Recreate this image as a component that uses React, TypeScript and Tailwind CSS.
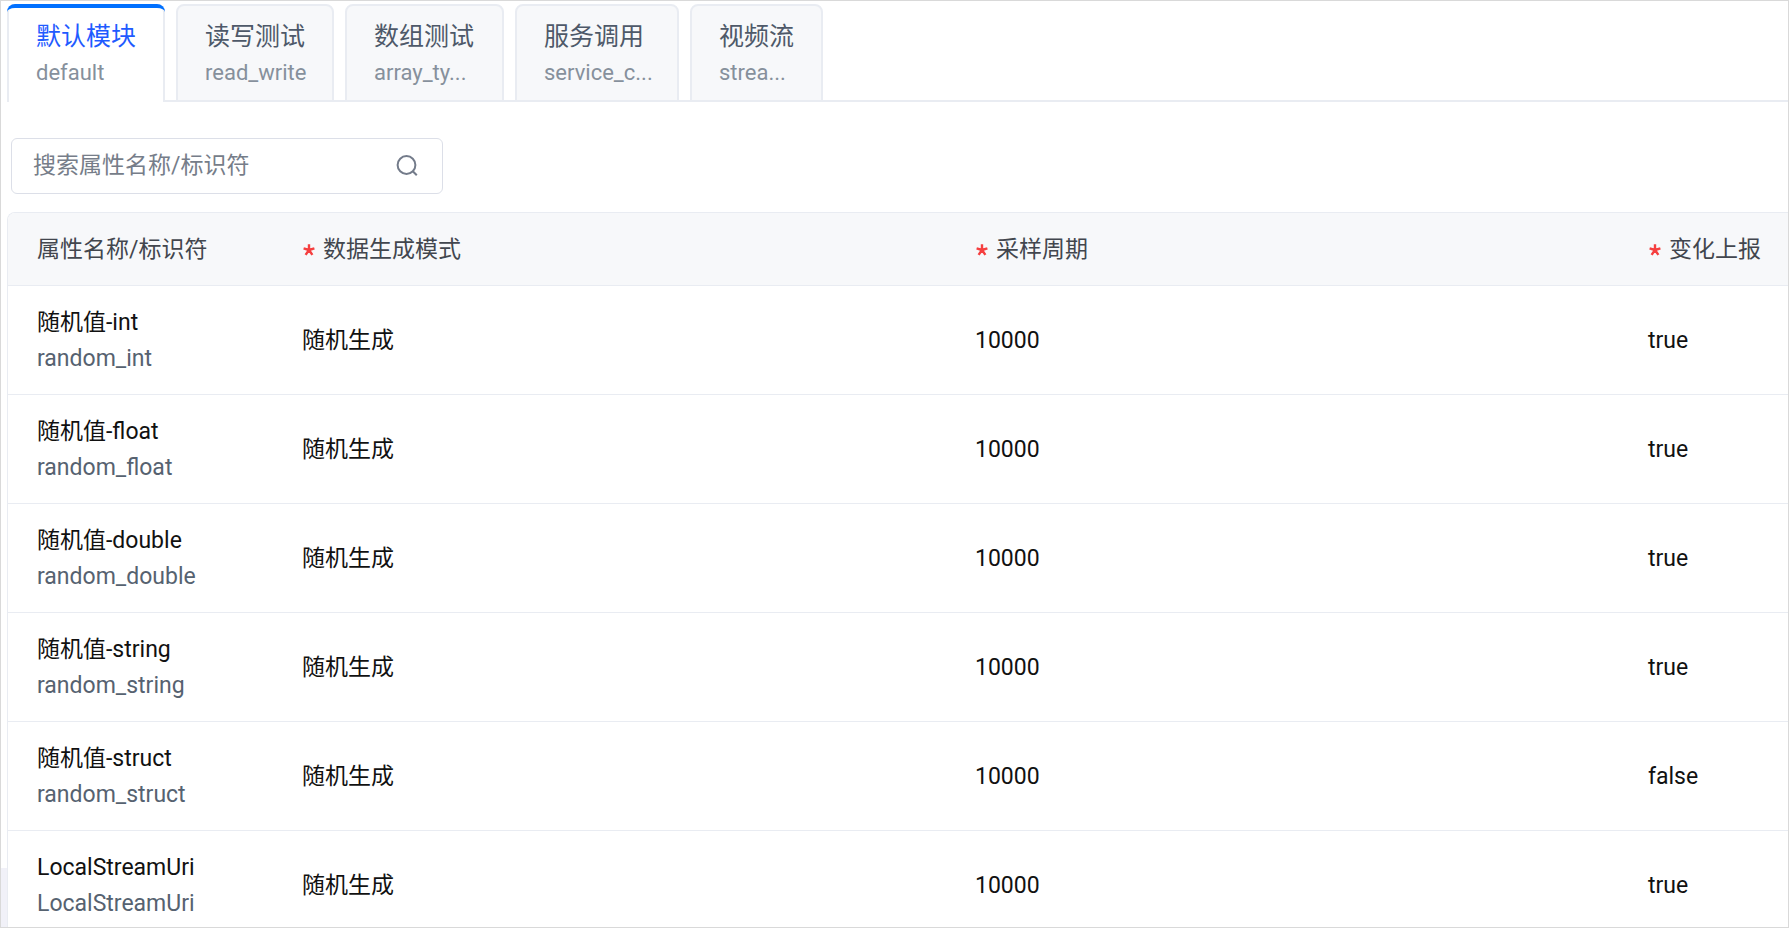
import { useState } from 'react';

type Tab = { title: string; id: string; width: string };
type Row = { name: string; id: string; mode: string; period: number; report: boolean };

const tabs: Tab[] = [
  { title: '默认模块', id: 'default', width: 'w-[158px]' },
  { title: '读写测试', id: 'read_write', width: 'w-[158px]' },
  { title: '数组测试', id: 'array_ty...', width: 'w-[159px]' },
  { title: '服务调用', id: 'service_c...', width: 'w-[164px]' },
  { title: '视频流', id: 'strea...', width: 'w-[133px]' },
];

const rows: Row[] = [
  { name: '随机值-int', id: 'random_int', mode: '随机生成', period: 10000, report: true },
  { name: '随机值-float', id: 'random_float', mode: '随机生成', period: 10000, report: true },
  { name: '随机值-double', id: 'random_double', mode: '随机生成', period: 10000, report: true },
  { name: '随机值-string', id: 'random_string', mode: '随机生成', period: 10000, report: true },
  { name: '随机值-struct', id: 'random_struct', mode: '随机生成', period: 10000, report: false },
  { name: 'LocalStreamUri', id: 'LocalStreamUri', mode: '随机生成', period: 10000, report: true },
];

function ModuleTabs() {
  const [active, setActive] = useState(0);
  return (
    <div className="flex pl-[6px] pt-[3px]" role="tablist">
      {tabs.map((tab, i) => {
        const on = i === active;
        return (
          <div key={tab.id} className="flex shrink-0">
            <button
              type="button"
              role="tab"
              aria-selected={on}
              onClick={() => setActive(i)}
              className={`${tab.width} flex h-[98px] flex-col rounded-t-lg border-x-2 border-t-2 border-[#e9ecf2] pl-[27px] pt-[13px] text-left ${
                on
                  ? 'relative bg-white before:absolute before:-inset-x-[2px] before:-top-[2px] before:h-[12px] before:rounded-t-lg before:border-t-4 before:border-[#0070ff]'
                  : 'border-b-2 bg-[#f7f8fa]'
              }`}
            >
              <span className={`block text-[25px] leading-[36px] ${on ? 'text-[#1f5bff]' : 'text-[#4e5969]'}`}>
                {tab.title}
              </span>
              <span className="block text-[22px] leading-[36px] text-[#86909c]">{tab.id}</span>
            </button>
            <div className="w-[11px] border-b-2 border-[#e9ecf2]" />
          </div>
        );
      })}
      <div className="grow border-b-2 border-[#e9ecf2]" />
    </div>
  );
}

function SearchBox() {
  return (
    <label className="ml-[10px] mt-[36px] flex h-[56px] w-[432px] items-center rounded-md border border-[#dcdfe8] pl-[21px] pr-[24px]">
      <input
        type="text"
        aria-label="搜索属性名称/标识符"
        placeholder="搜索属性名称/标识符"
        className="min-w-0 grow text-[23px] leading-[36px] outline-none placeholder:text-[#767d89]"
      />
      <svg viewBox="0 0 22 22" className="h-[22px] w-[22px] shrink-0" fill="none" stroke="#737b8a" strokeWidth="2">
        <circle cx="10.5" cy="10" r="8.9" />
        <path d="M16.8 16.3L20.8 20.3" />
      </svg>
    </label>
  );
}

function RequiredLabel({ text }: { text: string }) {
  return (
    <span className="flex items-center gap-[8px] whitespace-nowrap pl-px">
      <svg viewBox="0 0 12 12" className="h-[12px] w-[12px]" fill="none" stroke="#f53f3f" strokeWidth="2.4" aria-hidden="true">
        <path d="M6 6V.3M6 6L.6 4.3M6 6l5.4-1.700M6 6L2.600 10.900M6 6l3.400 4.900" />
      </svg>
      {text}
    </span>
  );
}

function PropertyTable() {
  return (
    <div className="ml-[6px] mt-[18px] overflow-hidden rounded-tl-lg border-l border-t border-[#e9ecf2]">
      <table className="w-full table-fixed border-separate border-spacing-0 text-[23px] leading-[36px]">
        <colgroup>
          <col className="w-[265px]" />
          <col />
          <col />
          <col className="w-[169px]" />
        </colgroup>
        <thead>
          <tr className="bg-[#f7f8fa] text-left text-[#42464e] [&>th]:h-[73px] [&>th]:border-b [&>th]:border-[#e9ecf2] [&>th]:p-0 [&>th]:pl-[29px] [&>th]:pt-[2px] [&>th]:font-normal">
            <th>属性名称/标识符</th>
            <th>
              <RequiredLabel text="数据生成模式" />
            </th>
            <th>
              <RequiredLabel text="采样周期" />
            </th>
            <th>
              <RequiredLabel text="变化上报" />
            </th>
          </tr>
        </thead>
        <tbody>
          {rows.map((row) => (
            <tr
              key={row.name}
              className="text-[#111111] [&>td]:h-[109px] [&>td]:border-b [&>td]:border-[#e9ecf2] [&>td]:p-0 [&>td]:pl-[29px] [&>td]:pt-[2px]"
            >
              <td>
                <div>{row.name}</div>
                <div className="text-[#566270]">{row.id}</div>
              </td>
              <td>{row.mode}</td>
              <td>{row.period}</td>
              <td>{String(row.report)}</td>
            </tr>
          ))}
        </tbody>
      </table>
    </div>
  );
}

export default function App() {
  return (
    <main className="relative h-screen overflow-hidden border border-[#d9d9d9] bg-white font-[Roboto,'Noto_Sans_CJK_SC',sans-serif]">
      <ModuleTabs />
      <SearchBox />
      <PropertyTable />
      <div className="absolute bottom-0 left-0 h-[59px] w-[6px] bg-[#f1f1f8]" />
    </main>
  );
}
